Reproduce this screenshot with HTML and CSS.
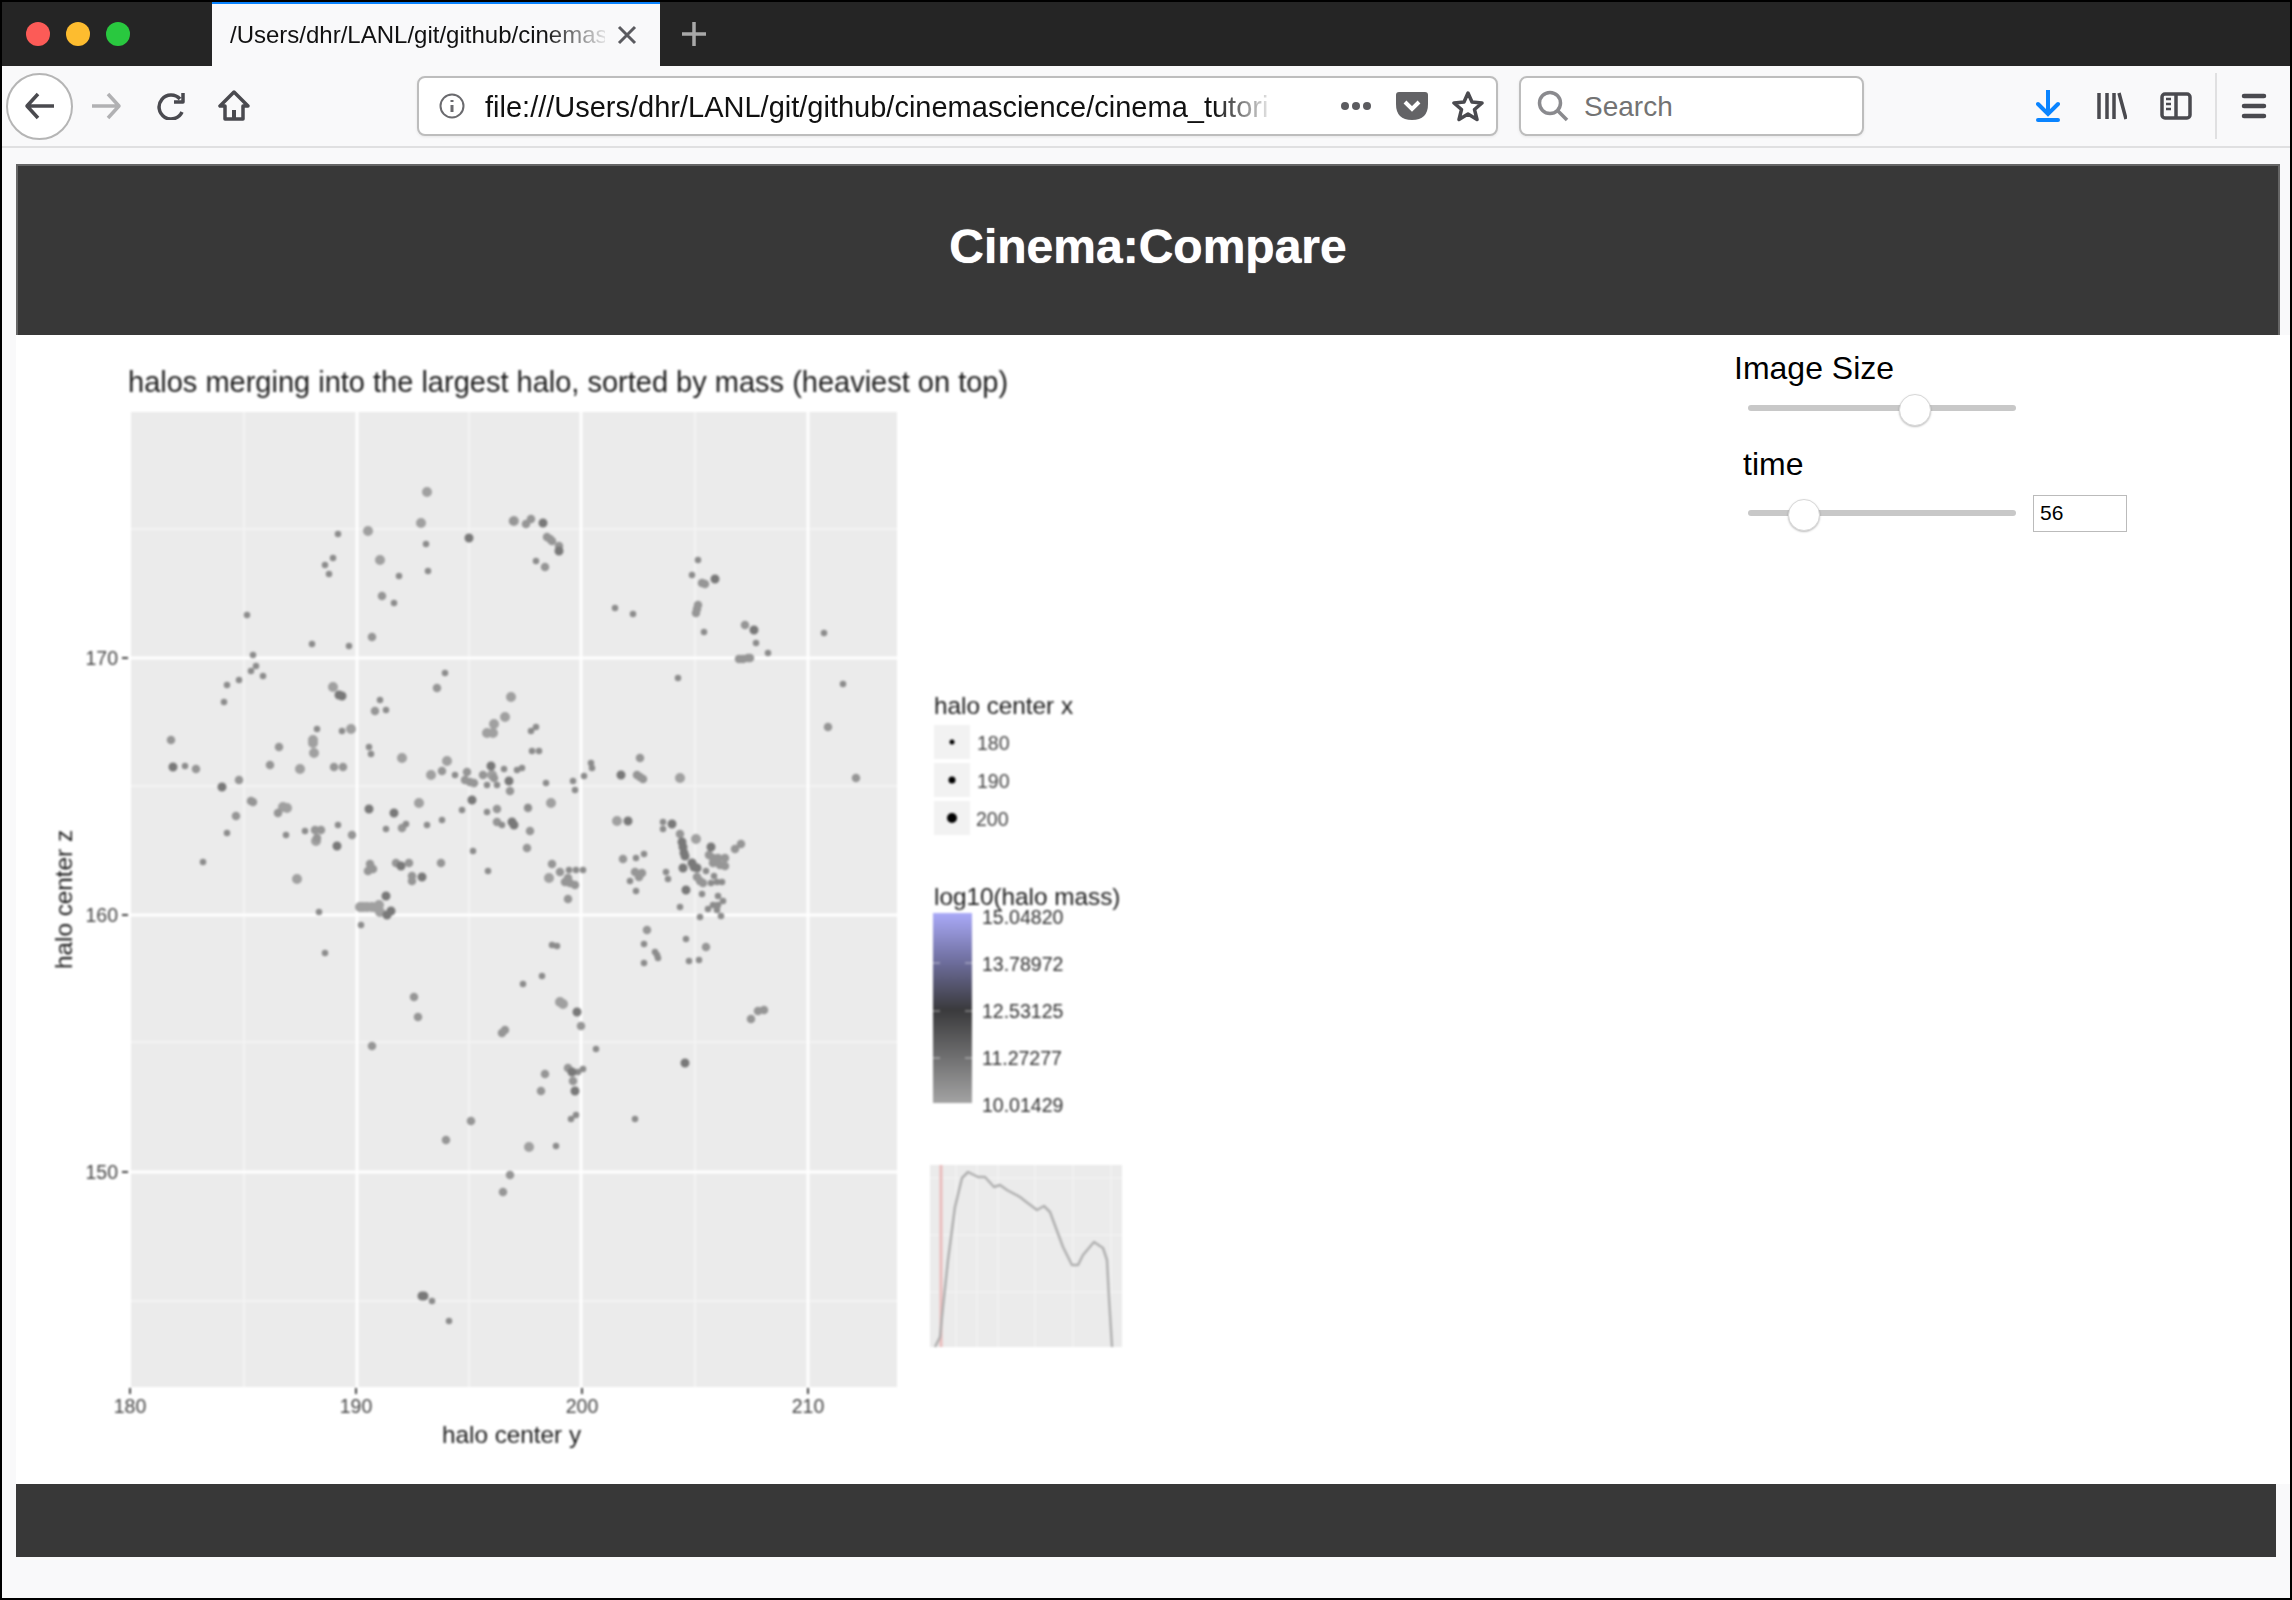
FILE: index.html
```html
<!DOCTYPE html>
<html lang="en">
<head>
    <meta charset="UTF-8">
    <meta name="viewport" content="width=device-width, initial-scale=1.0">
    <title>Cinema:Compare</title>
    <link rel="stylesheet" href="styles.css">
</head>
<body>
<div class="window">

    <div class="tabbar">
        <div class="lights">
            <span class="light red"></span>
            <span class="light yellow"></span>
            <span class="light green"></span>
        </div>
        <div class="tab">
            <span class="tab-title">/Users/dhr/LANL/git/github/cinemas</span>
            <svg class="tab-close" width="20" height="20" viewBox="0 0 20 20"><path d="M2 2L18 18M18 2L2 18"/></svg>
        </div>
        <svg class="tab-new" width="26" height="26" viewBox="0 0 26 26"><path d="M13 1V25M1 13H25"/></svg>
    </div>

    <div class="toolbar">
        <button class="back-btn">
            <svg class="icon" width="32" height="28" viewBox="0 0 32 28"><path d="M14 2L3 14L14 26M3 14H30"/></svg>
        </button>
        <div class="tool forward">
            <svg class="icon" width="32" height="28" viewBox="0 0 32 28"><path d="M18 2L29 14L18 26M29 14H2"/></svg>
        </div>
        <div class="tool reload">
            <svg class="icon" width="30" height="28" viewBox="0 0 30 28"><path d="M26 20A12 12 0 1 1 24 7M27 1V10H18"/></svg>
        </div>
        <div class="tool home">
            <svg class="icon" width="32" height="32" viewBox="0 0 32 32"><path d="M16 2L2 16H7V29H25V16H30Z"/><path class="icon-fill" d="M14 20H18V29H14Z"/></svg>
        </div>

        <div class="urlbar">
            <svg class="info" width="26" height="26" viewBox="0 0 26 26"><circle cx="13" cy="13" r="11.5"/><path class="info-i" d="M13 12V19M13 7V9"/></svg>
            <span class="url-text">file:///Users/dhr/LANL/git/github/cinemascience/cinema_tutori</span>
            <svg class="dots" width="32" height="8" viewBox="0 0 32 8"><circle cx="5" cy="4" r="4"/><circle cx="16" cy="4" r="4"/><circle cx="27" cy="4" r="4"/></svg>
            <svg class="pocket" width="32" height="28" viewBox="0 0 32 28"><path class="pocket-body" d="M3 0H29Q32 0 32 3V12Q32 28 16 28Q0 28 0 12V3Q0 0 3 0Z"/><path class="pocket-v" d="M9 10L16 17L23 10"/></svg>
            <svg class="icon star" width="32" height="32" viewBox="0 0 32 32"><path d="M16 3L20 12L30 13L22.500 19.500L25 29.500L16 24L7 29.500L9.500 19.500L2 13L12 12Z"/></svg>
        </div>

        <div class="searchbar">
            <svg class="glass" width="32" height="32" viewBox="0 0 32 32"><circle cx="13" cy="13" r="10.500"/><path d="M20.500 20.500L30 30"/></svg>
            <span class="search-text">Search</span>
        </div>

        <div class="tool download">
            <svg class="download-icon" width="24" height="32" viewBox="0 0 24 32"><path d="M12 0V23M2 14L12 24L22 14"/><path d="M2 30H22"/></svg>
        </div>
        <div class="tool">
            <svg class="icon" width="30" height="28" viewBox="0 0 30 28"><path d="M2 1V27M10 1V27M17 1V27M22 1L29 27"/></svg>
        </div>
        <div class="tool">
            <svg class="icon" width="32" height="28" viewBox="0 0 32 28"><rect x="2" y="2" width="28" height="24" rx="3"/><path d="M16 2V26"/><path class="thin" d="M6 7H11M6 12H11M6 17H11"/></svg>
        </div>
        <div class="divider"></div>
        <div class="tool menu">
            <svg class="icon menu-icon" width="26" height="26" viewBox="0 0 26 26"><path d="M3 3H23M3 13H23M3 23H23"/></svg>
        </div>
    </div>

    <div class="page">
        <header class="page-header">
            <h1>Cinema:Compare</h1>
        </header>

        <main class="content">
            <svg class="plot" width="1150" height="1149" viewBox="16 335 1150 1149">
                <text class="plot-title" x="128" y="392">halos merging into the largest halo, sorted by mass (heaviest on top)</text>

                <rect class="panel" x="131" y="412" width="766" height="975"/>
                <path class="grid-minor" d="M244 412V1387M469 412V1387M695 412V1387M131 529H897M131 786H897M131 1042H897M131 1301H897"/>
                <path class="grid-major" d="M357 412V1387M581 412V1387M808 412V1387M131 658H897M131 915H897M131 1172H897"/>

                <path class="pts pts-large" d="M427 492h0M421 523h0M514 521h0M368 531h0M380 560h0M333 687h0M511 697h0M505 717h0M494 724h0M487 733h0M493 733h0M351 729h0M313 740h0M313 743h0M314 753h0M402 758h0M300 769h0M447 761h0M431 775h0M492 775h0M283 807h0M287 808h0M419 803h0M551 803h0M680 778h0M617 821h0M696 839h0M549 878h0M529 1147h0M560 1002h0M563 1004h0M316 841h0M297 879h0M360 907h0M363 907h0M367 907h0M372 907h0M379 905h0M377 908h0M380 912h0"/>
                <path class="pts pts-med" d="M531 519h0M382 596h0M372 637h0M437 688h0M375 711h0M171 740h0M279 747h0M196 769h0M270 765h0M334 767h0M343 767h0M442 771h0M467 772h0M465 780h0M470 782h0M474 783h0M483 775h0M494 778h0M510 791h0M239 780h0M251 801h0M253 802h0M236 816h0M278 813h0M315 830h0M321 830h0M317 838h0M352 835h0M402 828h0M528 808h0M497 809h0M497 822h0M530 831h0M513 521h0M526 524h0M547 537h0M550 539h0M552 541h0M559 546h0M545 567h0M702 583h0M705 584h0M698 605h0M697 609h0M696 613h0M745 625h0M739 659h0M743 659h0M748 658h0M750 658h0M828 727h0M856 778h0M527 848h0M640 758h0M637 775h0M640 777h0M643 779h0M680 834h0M709 855h0M713 858h0M718 858h0M725 858h0M713 863h0M720 865h0M725 866h0M735 849h0M741 844h0M623 859h0M635 872h0M642 873h0M639 877h0M697 877h0M700 881h0M703 883h0M552 864h0M560 872h0M568 878h0M565 882h0M570 883h0M575 885h0M568 899h0M647 930h0M706 947h0M751 1019h0M758 1011h0M764 1010h0M581 1026h0M502 1033h0M505 1030h0M545 1074h0M568 1068h0M573 1081h0M541 1091h0M510 1175h0M503 1192h0M414 997h0M418 1017h0M372 1046h0M471 1121h0M446 1140h0M441 863h0M396 863h0M409 863h0M412 876h0M412 881h0M370 864h0M368 871h0M373 869h0"/>
                <path class="pts pts-small" d="M338 534h0M426 544h0M333 558h0M325 565h0M329 574h0M428 571h0M399 576h0M536 561h0M394 603h0M247 615h0M312 644h0M349 646h0M253 655h0M256 666h0M251 671h0M263 676h0M239 680h0M227 685h0M224 702h0M445 673h0M380 700h0M386 710h0M536 727h0M531 731h0M342 731h0M317 729h0M369 747h0M371 754h0M532 751h0M539 751h0M185 766h0M455 775h0M504 769h0M517 770h0M522 768h0M487 785h0M497 785h0M227 833h0M286 835h0M305 831h0M338 825h0M386 829h0M406 824h0M427 825h0M442 820h0M462 810h0M487 812h0M502 825h0M615 608h0M633 614h0M698 560h0M692 575h0M704 632h0M756 643h0M768 653h0M824 633h0M678 678h0M843 684h0M546 783h0M573 781h0M575 790h0M584 776h0M591 763h0M592 768h0M528 807h0M663 822h0M663 829h0M644 854h0M636 858h0M666 872h0M668 879h0M630 881h0M636 891h0M706 871h0M714 876h0M711 883h0M717 882h0M722 882h0M702 894h0M718 896h0M723 901h0M713 905h0M718 905h0M708 909h0M717 910h0M721 916h0M680 907h0M700 917h0M569 870h0M576 870h0M583 870h0M552 945h0M557 946h0M644 944h0M655 952h0M657 955h0M658 958h0M644 963h0M686 939h0M689 961h0M699 960h0M542 976h0M523 984h0M596 1049h0M578 1072h0M583 1069h0M576 1115h0M571 1119h0M635 1119h0M556 1146h0M203 862h0M473 851h0M488 871h0M319 912h0M361 925h0M325 953h0M432 1301h0M449 1321h0"/>
                <path class="pts pts-dark" d="M469 538h0M543 523h0M754 630h0M339 695h0M342 696h0M173 767h0M491 766h0M509 781h0M222 787h0M369 809h0M394 813h0M472 800h0M512 822h0M514 825h0M559 551h0M621 775h0M628 821h0M672 824h0M682 842h0M683 847h0M684 853h0M685 856h0M692 863h0M694 867h0M683 868h0M697 868h0M711 847h0M686 890h0M577 1012h0M572 1072h0M575 1091h0M685 1063h0M422 1296h0M424 1296h0M386 896h0M401 866h0M422 877h0M337 846h0M391 911h0M387 915h0M715 579h0"/>

                <path class="axis-tick" d="M122 658H128M122 915H128M122 1172H128M130 1388V1394M356 1388V1394M582 1388V1394M808 1388V1394"/>
                <text class="axis-num end" x="118" y="665">170</text>
                <text class="axis-num end" x="118" y="922">160</text>
                <text class="axis-num end" x="118" y="1179">150</text>
                <text class="axis-num mid" x="130" y="1413">180</text>
                <text class="axis-num mid" x="356" y="1413">190</text>
                <text class="axis-num mid" x="582" y="1413">200</text>
                <text class="axis-num mid" x="808" y="1413">210</text>
                <text class="axis-label" x="442" y="1443">halo center y</text>
                <text class="axis-label" transform="translate(72 969) rotate(-90)">halo center z</text>

                <text class="axis-label" x="934" y="714">halo center x</text>
                <rect class="key" x="934" y="725" width="36" height="34"/>
                <rect class="key" x="934" y="763" width="36" height="34"/>
                <rect class="key" x="934" y="801" width="36" height="34"/>
                <circle cx="952" cy="742" r="2.500"/>
                <circle cx="952" cy="780" r="3.500"/>
                <circle cx="952" cy="818" r="5"/>
                <text class="axis-num" x="977" y="750">180</text>
                <text class="axis-num" x="977" y="788">190</text>
                <text class="axis-num" x="976" y="826">200</text>

                <text class="axis-label" x="934" y="905">log10(halo mass)</text>
                <defs>
                    <linearGradient id="mass-scale" x1="0" y1="0" x2="0" y2="1">
                        <stop offset="0" stop-color="#aaaaf8"/>
                        <stop offset="0.26" stop-color="#6d6d9c"/>
                        <stop offset="0.51" stop-color="#3a3a3c"/>
                        <stop offset="1" stop-color="#a3a3a3"/>
                    </linearGradient>
                </defs>
                <rect x="933" y="913" width="39" height="190" fill="url(#mass-scale)"/>
                <path class="scale-tick" d="M933 963H940M965 963H972M933 1011H940M965 1011H972M933 1058H940M965 1058H972"/>
                <text class="axis-num mass" x="982" y="924">15.04820</text>
                <text class="axis-num mass" x="982" y="971">13.78972</text>
                <text class="axis-num mass" x="982" y="1018">12.53125</text>
                <text class="axis-num mass" x="982" y="1065">11.27277</text>
                <text class="axis-num mass" x="982" y="1112">10.01429</text>

                <rect class="panel" x="930" y="1165" width="192" height="182"/>
                <path class="mini-grid" d="M956 1165V1347M977 1165V1347M998 1165V1347M1035 1165V1347M1073 1165V1347M1111 1165V1347M930 1178H1122M930 1235H1122M930 1292H1122"/>
                <path class="mini-marker" d="M941 1165V1347"/>
                <polyline class="mini-line" points="935,1347 940,1337 943,1307 948,1260 955,1207 962,1178 968,1172 978,1177 985,1177 994,1187 1000,1185 1007,1190 1020,1197 1025,1201 1037,1210 1044,1206 1050,1212 1063,1247 1072,1265 1078,1265 1083,1255 1094,1242 1103,1248 1107,1260 1109,1297 1112,1347"/>
            </svg>

            <div class="controls">
                <label class="control-label">Image Size</label>
                <div class="slider-row">
                    <input class="slider" type="range" min="0" max="100" value="64">
                </div>
                <label class="control-label time-label">time</label>
                <div class="slider-row time-row">
                    <input class="slider" type="range" min="0" max="100" value="17">
                    <input class="value-box" type="text" value="56">
                </div>
            </div>
        </main>

        <footer class="page-footer"></footer>
    </div>

</div>
</body>
</html>
```

FILE: styles.css
```css
* {
    box-sizing: border-box;
}

body {
    margin: 0;
    font-family: "Liberation Sans", Arial, sans-serif;
}

.window {
    width: 2292px;
    height: 1600px;
    border: 2px solid #000;
    border-bottom-width: 2px;
    background-color: #f9f9fa;
    overflow: hidden;
}

/* tab strip */
.tabbar {
    display: flex;
    align-items: center;
    height: 64px;
    background-color: #252525;
}

.lights {
    display: flex;
    gap: 16px;
    width: 210px;
    padding-left: 24px;
}

.light {
    width: 24px;
    height: 24px;
    border-radius: 50%;
}
.red { background-color: #fc5b57; }
.yellow { background-color: #fdbc2f; }
.green { background-color: #29c83f; }

.tab {
    display: flex;
    align-items: center;
    width: 448px;
    height: 64px;
    padding: 0 22px 0 18px;
    border-top: 2px solid #0a84ff;
    background-color: #f9f9fa;
}

.tab-title {
    flex: none;
    width: 375px;
    white-space: nowrap;
    font-size: 24px;
    color: #111;
    -webkit-mask-image: linear-gradient(to right, #000 84%, rgba(0, 0, 0, 0.1));
    mask-image: linear-gradient(to right, #000 84%, rgba(0, 0, 0, 0.1));
}

.tab-close {
    flex: none;
    margin-left: 12px;
    fill: none;
    stroke: #5b5b5f;
    stroke-width: 3;
}

.tab-new {
    margin-left: 21px;
    fill: none;
    stroke: #a8a8a8;
    stroke-width: 3.500;
}

/* toolbar */
.toolbar {
    display: flex;
    align-items: center;
    height: 82px;
    padding-left: 4px;
    border-bottom: 2px solid #e0e0e1;
}

.icon {
    fill: none;
    stroke: #4a4a4f;
    stroke-width: 3.500;
    stroke-linejoin: round;
}
.icon .thin {
    stroke-width: 2.500;
}
.icon-fill {
    fill: #4a4a4f;
    stroke-width: 0;
}
.menu-icon {
    stroke-width: 4.500;
    stroke-linecap: round;
}

.back-btn {
    display: flex;
    align-items: center;
    justify-content: center;
    width: 67px;
    height: 67px;
    padding: 0;
    border: 2px solid #b5b5b5;
    border-radius: 50%;
    background-color: #fff;
}

.tool {
    display: flex;
    align-items: center;
    justify-content: center;
    flex: none;
    width: 64px;
}
.forward {
    width: 66px;
}
.forward .icon {
    stroke: #b1b1b3;
}
.home {
    width: 62px;
}
.menu {
    margin-left: 5px;
}

.urlbar, .searchbar {
    display: flex;
    align-items: center;
    flex: none;
    height: 60px;
    border: 2px solid #bdbdbd;
    border-radius: 8px;
    background-color: #fff;
    box-shadow: 0 1px 3px rgba(0, 0, 0, 0.08);
}

.urlbar {
    width: 1081px;
    margin-left: 152px;
    padding-left: 20px;
}

.info {
    flex: none;
    fill: none;
    stroke: #6a6a6e;
    stroke-width: 2;
}
.info-i {
    stroke-width: 3;
}

.url-text {
    flex: none;
    width: 784px;
    margin-left: 20px;
    padding-top: 2px;
    white-space: nowrap;
    font-size: 29px;
    color: #111;
    -webkit-mask-image: linear-gradient(to right, #000 93%, rgba(0, 0, 0, 0.1));
    mask-image: linear-gradient(to right, #000 93%, rgba(0, 0, 0, 0.1));
}

.dots {
    flex: none;
    margin-left: 71px;
    fill: #5b5b5f;
}

.pocket {
    flex: none;
    margin-left: 24px;
}
.pocket-body {
    fill: #636366;
}
.pocket-v {
    fill: none;
    stroke: #fff;
    stroke-width: 4;
}

.star {
    flex: none;
    margin-left: 24px;
}

.searchbar {
    width: 345px;
    margin-left: 21px;
    padding-left: 16px;
}

.glass {
    flex: none;
    fill: none;
    stroke: #8a8a8e;
    stroke-width: 3.500;
}

.search-text {
    margin-left: 15px;
    padding-top: 2px;
    font-size: 28px;
    color: #737373;
}

.download {
    margin-left: 152px;
}
.download-icon {
    fill: none;
    stroke: #0a84ff;
    stroke-width: 4;
    stroke-linecap: round;
}

.divider {
    flex: none;
    width: 2px;
    height: 66px;
    margin-left: 7px;
    background-color: #e0e0e1;
}

/* page */
.page {
    padding: 16px 0 0 14px;
}

.page-header {
    display: flex;
    align-items: center;
    justify-content: center;
    width: 2264px;
    height: 171px;
    border: 2px solid #666;
    border-bottom: 0;
    background-color: #383838;
}

.page-header h1 {
    margin: 0 0 8px;
    font-size: 48px;
    font-weight: bold;
    color: #fff;
    text-shadow: 0 0 1px #fff;
}

.content {
    display: flex;
    height: 1149px;
    background-color: #fff;
}

.page-footer {
    width: 2260px;
    height: 73px;
    background-color: #383838;
}

.plot {
    flex: none;
    filter: blur(0.9px);
}

.plot text {
    fill: #1c1c1c;
}

.plot-title {
    font-size: 29px;
}

.panel {
    fill: #ebebeb;
}

.grid-major, .grid-minor, .mini-grid {
    fill: none;
    stroke: #fff;
}
.grid-major {
    stroke-width: 3;
}
.grid-minor {
    stroke-width: 1.500;
    opacity: 0.55;
}
.mini-grid {
    stroke-width: 1;
    opacity: 0.5;
}

.pts {
    fill: none;
    stroke-linecap: round;
}
.pts-large {
    stroke: #a0a0a0;
    stroke-width: 10;
}
.pts-med {
    stroke: #969696;
    stroke-width: 8.500;
}
.pts-small {
    stroke: #8c8c8c;
    stroke-width: 6.500;
}
.pts-dark {
    stroke: #797979;
    stroke-width: 9;
}

.axis-tick {
    fill: none;
    stroke: #444;
    stroke-width: 2;
}

.plot .axis-num {
    font-size: 19.500px;
    fill: #444;
}
.plot .mass {
    fill: #303030;
}
.end {
    text-anchor: end;
}
.mid {
    text-anchor: middle;
}

.axis-label {
    font-size: 24.300px;
}

.key {
    fill: #f2f2f2;
}

.scale-tick {
    fill: none;
    stroke: #fff;
    stroke-width: 1;
    opacity: 0.6;
}

.mini-marker {
    fill: none;
    stroke: #eabcbc;
    stroke-width: 3;
}

.mini-line {
    fill: none;
    stroke: #b0b0b0;
    stroke-width: 2.500;
    stroke-linejoin: round;
}

/* controls */
.controls {
    margin-left: 568px;
    padding-top: 15px;
}

.control-label {
    display: block;
    font-size: 32px;
    line-height: 36px;
    color: #000;
}

.time-label {
    margin-top: 19px;
    margin-left: 9px;
}

.slider-row {
    display: flex;
    align-items: center;
    height: 38px;
    margin-top: 3px;
    padding-left: 14px;
}

.time-row {
    margin-top: 12px;
}

.slider {
    -webkit-appearance: none;
    appearance: none;
    flex: none;
    width: 268px;
    height: 34px;
    margin: 0;
    background: transparent;
}

.slider::-webkit-slider-runnable-track {
    height: 6px;
    border-radius: 3px;
    background-color: #c8c8c8;
}

.slider::-webkit-slider-thumb {
    -webkit-appearance: none;
    width: 32px;
    height: 32px;
    margin-top: -11px;
    border: 1px solid #d8d8d8;
    border-radius: 50%;
    background-color: #fff;
    box-shadow: 0 1px 2px rgba(0, 0, 0, 0.25);
}

.value-box {
    width: 94px;
    height: 37px;
    margin-left: 17px;
    padding: 0 6px;
    border: 1px solid #bbb;
    border-radius: 0;
    font-family: "Liberation Sans", Arial, sans-serif;
    font-size: 21px;
    color: #000;
}
```
